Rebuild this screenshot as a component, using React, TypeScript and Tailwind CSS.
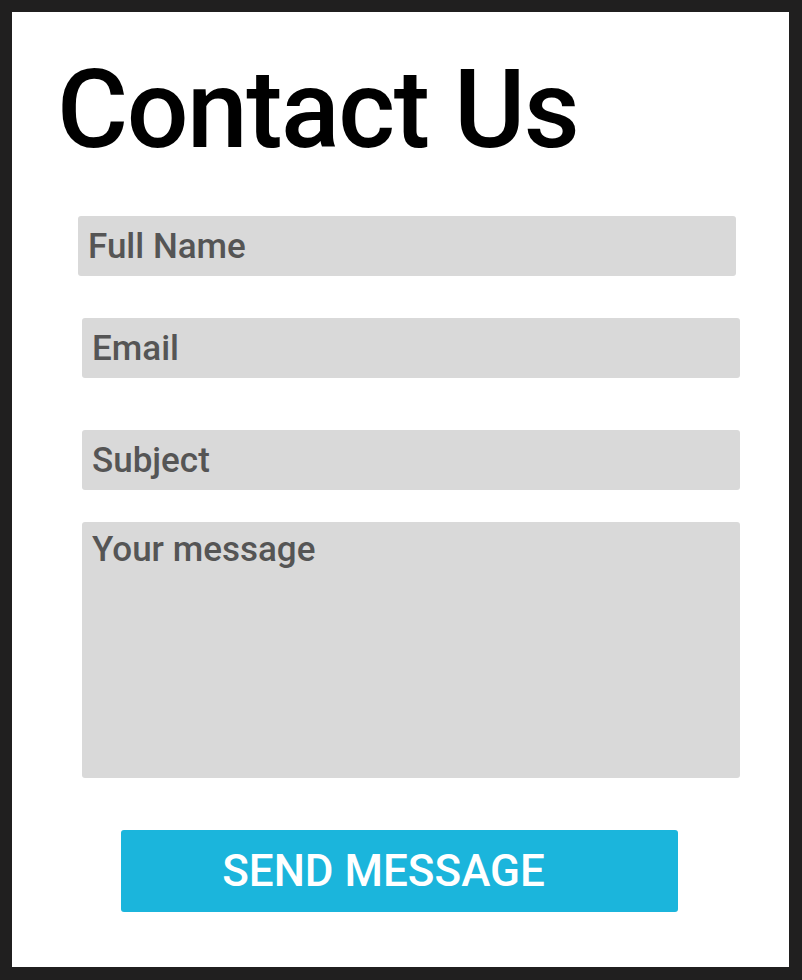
import React from "react";

const field =
  "block w-[658px] h-[60px] rounded-[3px] bg-[#d9d9d9] px-[10px] text-[35px] font-medium text-[#555] placeholder:text-[#555] outline-none";

export default function App() {
  return (
    <div
      className="box-border h-[980px] w-[802px] border-t-[12px] border-l-[12px] border-r-[13px] border-b-[13px] border-[#201f1f] bg-white"
      style={{ fontFamily: "Roboto, 'Noto Sans', sans-serif" }}
    >
      <h1 className="ml-[45px] mt-[38px] h-[126px] text-[109px] leading-[120px] font-medium text-black tracking-[-1.5px]">
        Contact Us
      </h1>
      <form className="flex flex-col" onSubmit={(e) => e.preventDefault()}>
        <input className={`${field} ml-[66px] mt-[40px]`} placeholder="Full Name" />
        <input className={`${field} ml-[70px] mt-[42px]`} placeholder="Email" />
        <input className={`${field} ml-[70px] mt-[52px]`} placeholder="Subject" />
        <textarea
          className={`${field} ml-[70px] mt-[32px] h-[256px] resize-none pt-[6px] leading-[44px]`}
          placeholder="Your message"
        />
        <button
          type="submit"
          className="ml-[109px] mt-[52px] h-[82px] w-[557px] rounded-[3px] bg-[#1bb5dc] pr-[32px] text-[44px] font-medium text-white"
        >
          SEND MESSAGE
        </button>
      </form>
    </div>
  );
}
